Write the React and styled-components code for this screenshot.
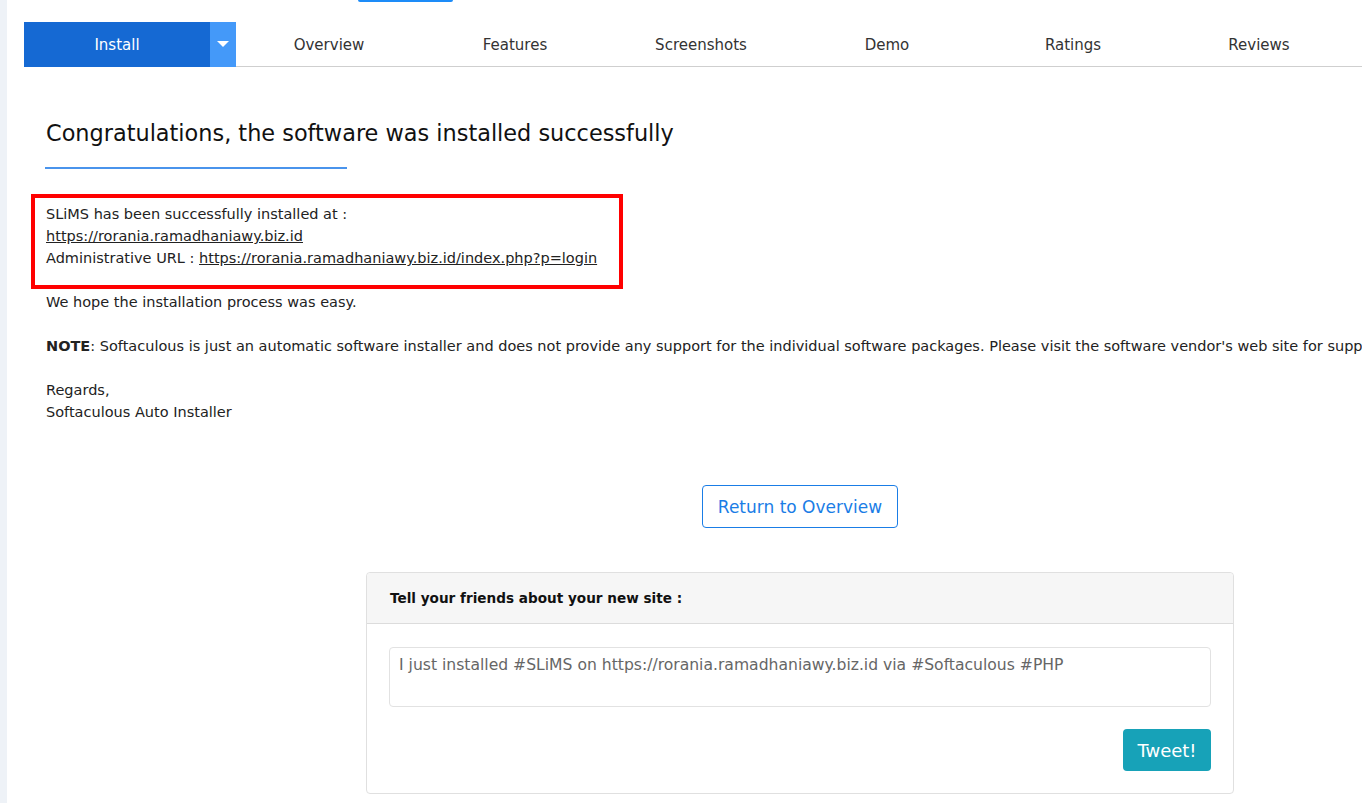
import styled, { createGlobalStyle } from 'styled-components';

const GlobalStyle = createGlobalStyle`
	html, body {
		margin: 0;
		padding: 0;
		background: #fff;
		overflow: hidden;
	}
	body {
		font-family: "DejaVu Sans", "Open Sans", sans-serif;
		color: #222;
	}
`;

const tabs = ['Overview', 'Features', 'Screenshots', 'Demo', 'Ratings', 'Reviews'];

export default function App() {
	return (
		<>
			<GlobalStyle />
			<Page>
				<SideStrip />
				<Main>
					<TopEdge />
					<TabBar>
						<InstallTab>Install</InstallTab>
						<DropTab>
							<svg width="12" height="7" viewBox="0 0 12 7">
								<path d="M0 0 L12 0 L6 6 Z" fill="#fff" />
							</svg>
						</DropTab>
						{tabs.map((t) => (
							<Tab key={t}>{t}</Tab>
						))}
						<TabRest />
					</TabBar>

					<Content>
						<Heading>Congratulations, the software was installed successfully</Heading>
						<HeadingRule />

						<Highlight>
							SLiMS has been successfully installed at :<br />
							<Link href="#">https://rorania.ramadhaniawy.biz.id</Link>
							<br />
							Administrative URL : <Link href="#">https://rorania.ramadhaniawy.biz.id/index.php?p=login</Link>
						</Highlight>

						<Para>We hope the installation process was easy.</Para>
						<Para>
							<b>NOTE</b>: Softaculous is just an automatic software installer and does not provide any support for the individual software packages. Please visit the software vendor's web site for support!
						</Para>
						<Para>
							Regards,
							<br />
							Softaculous Auto Installer
						</Para>

						<Center>
							<OutlineButton>Return to Overview</OutlineButton>
						</Center>

						<Center>
							<Card>
								<CardHeader>Tell your friends about your new site :</CardHeader>
								<CardBody>
									<ShareBox defaultValue="I just installed #SLiMS on https://rorania.ramadhaniawy.biz.id via #Softaculous #PHP" />
									<Actions>
										<TweetButton>Tweet!</TweetButton>
									</Actions>
								</CardBody>
							</Card>
						</Center>
					</Content>
				</Main>
			</Page>
		</>
	);
}

const Page = styled.div`
	display: flex;
	min-height: 803px;
	width: 1600px;
`;

const SideStrip = styled.div`
	width: 7px;
	flex: none;
	background: #eef2f7;
`;

const Main = styled.div`
	flex: 1;
	padding-left: 17px;
	position: relative;
`;

const TopEdge = styled.div`
	position: absolute;
	top: 0;
	left: 351px;
	width: 95px;
	height: 2px;
	background: #1d8cf8;
	border-radius: 0 0 3px 3px;
`;

const TabBar = styled.div`
	display: flex;
	margin-top: 22px;
	height: 45px;
`;

const InstallTab = styled.div`
	width: 186px;
	padding-top: 1px;
	box-sizing: border-box;
	background: #1569d3;
	color: #fff;
	font-size: 15px;
	display: flex;
	align-items: center;
	justify-content: center;
`;

const DropTab = styled.div`
	width: 26px;
	background: #4499f9;
	display: flex;
	align-items: center;
	justify-content: center;
`;

const Tab = styled.div`
	width: 186px;
	flex: none;
	padding-top: 2px;
	box-sizing: border-box;
	border-bottom: 1px solid #cfcfcf;
	color: #333;
	font-size: 15px;
	display: flex;
	align-items: center;
	justify-content: center;
`;

const TabRest = styled.div`
	flex: 1;
	border-bottom: 1px solid #cfcfcf;
`;

const Content = styled.div`
	width: 1552px;
	padding-top: 50px;
	font-size: 14.5px;
	line-height: 22px;
`;

const Heading = styled.h1`
	margin: 0 0 0 22px;
	font-size: 22.4px;
	font-weight: 400;
	line-height: 32px;
	color: #111;
`;

const HeadingRule = styled.div`
	margin: 18px 0 0 21px;
	width: 302px;
	height: 2px;
	background: #4a94ec;
`;

const Highlight = styled.div`
	margin: 25px 0 0 7px;
	width: 573px;
	border: 4px solid #f00;
	padding: 5px 0 16px 11px;
`;

const Link = styled.a`
	color: #222;
	text-decoration: underline;
`;

const Para = styled.p`
	margin: 0 0 22px 22px;
	white-space: nowrap;

	&:first-of-type {
		margin-top: 2px;
	}
`;

const Center = styled.div`
	display: flex;
	justify-content: center;
`;

const OutlineButton = styled.button`
	margin-top: 40px;
	height: 43px;
	padding: 0 15px;
	border: 1px solid #1a7de6;
	border-radius: 4px;
	background: #fff;
	color: #1a7de6;
	font-family: inherit;
	font-size: 17px;
`;

const Card = styled.div`
	margin-top: 44px;
	width: 866px;
	border: 1px solid #e0e0e0;
	border-radius: 4px;
`;

const CardHeader = styled.div`
	height: 50px;
	padding-left: 23px;
	display: flex;
	align-items: center;
	background: #f6f6f6;
	border-bottom: 1px solid #dcdcdc;
	font-size: 13.6px;
	font-weight: 700;
	color: #111;
	border-radius: 4px 4px 0 0;
`;

const CardBody = styled.div`
	padding: 23px 22px 22px 22px;
`;

const ShareBox = styled.textarea`
	display: block;
	box-sizing: border-box;
	width: 100%;
	height: 60px;
	padding: 6px 9px;
	border: 1px solid #e2e2e2;
	border-radius: 4px;
	resize: none;
	font-family: inherit;
	font-size: 15.6px;
	line-height: 22px;
	color: #666;
	outline: none;
`;

const Actions = styled.div`
	display: flex;
	justify-content: flex-end;
	margin-top: 22px;
`;

const TweetButton = styled.button`
	height: 42px;
	width: 88px;
	border: none;
	border-radius: 4px;
	background: #17a2b8;
	color: #fff;
	font-family: inherit;
	font-size: 18px;
`;
